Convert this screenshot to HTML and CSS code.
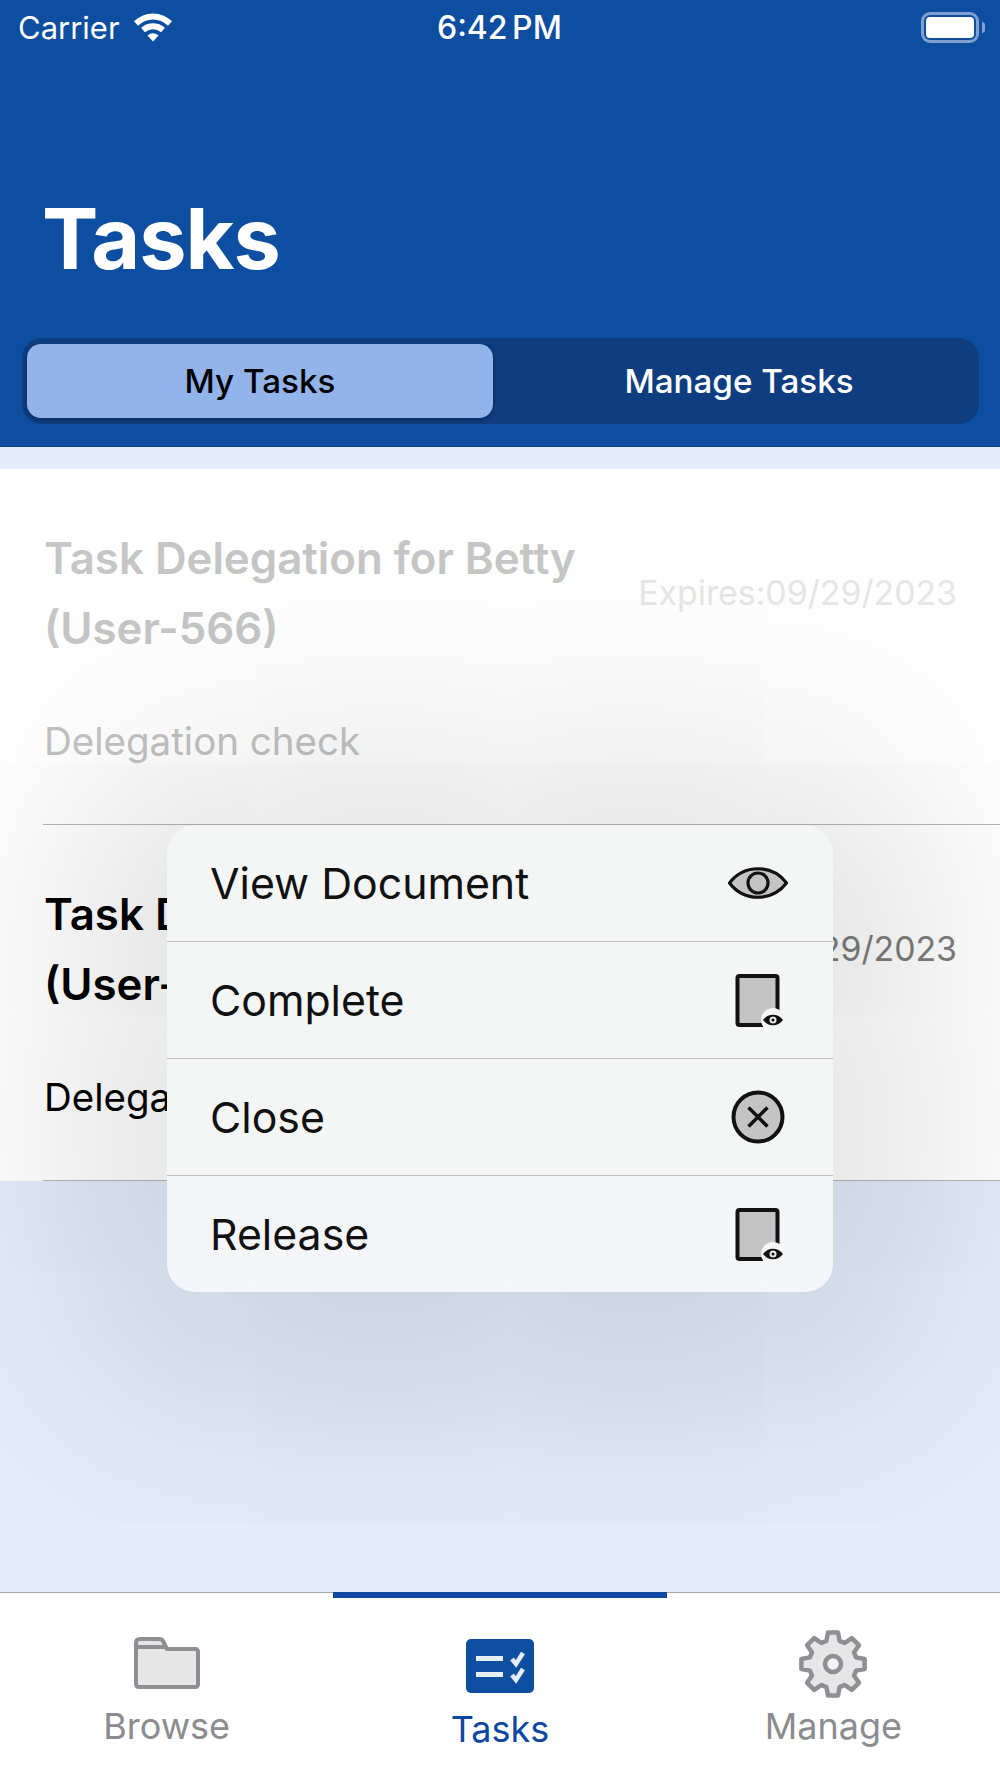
FILE: index.html
```html
<!DOCTYPE html>
<html lang="en">
<head>
<meta charset="utf-8">
<title>Tasks</title>
<link rel="stylesheet" href="styles.css">
</head>
<body>
<div class="app">
  <header class="header">
    <div class="status">
      <div class="status-left">
        <span class="carrier">Carrier</span>
        <svg class="wifi" viewBox="0 0 40 30"><path d="M3 11.5C13 2 27 2 37 11.5" /><path d="M10 18C16 13 24 13 30 18" /><path class="wifi-dot" d="M14.5 23.5C18 20.5 22 20.5 25.5 23.5L20 29.5Z"/></svg>
      </div>
      <span class="time">6:42 PM</span>
      <div class="battery"><div class="battery-fill"></div><div class="battery-cap"></div></div>
    </div>
    <h1 class="title">Tasks</h1>
    <div class="segments">
      <div class="segment segment-on">My Tasks</div>
      <div class="segment segment-off">Manage Tasks</div>
    </div>
  </header>
  <div class="band"></div>
  <section class="list">
    <article class="task task-faded">
      <div class="task-main">
        <h2 class="task-title">Task Delegation for Betty (User-566)</h2>
        <p class="task-sub">Delegation check</p>
      </div>
      <div class="task-date">Expires:09/29/2023</div>
    </article>
    <article class="task">
      <div class="task-main">
        <h2 class="task-title">Task Delegation for Betty (User-566)</h2>
        <p class="task-sub">Delegation check</p>
      </div>
      <div class="task-date">Expires:09/29/2023</div>
    </article>
  </section>
  <div class="empty"></div>
  <nav class="tabs">
    <div class="tab">
      <svg class="tab-icon icon-folder" viewBox="0 0 66 52"><path class="folder-back" d="M2 6Q2 2 6 2H25Q28 2 29 4L33 12H61Q64 12 64 15V47Q64 50 61 50H5Q2 50 2 47Z"/><path class="folder-line" d="M3 10H31"/></svg>
      <span class="tab-label">Browse</span>
    </div>
    <div class="tab tab-on">
      <svg class="tab-icon icon-tasks" viewBox="0 0 68 54"><rect class="tasks-bg" width="68" height="54" rx="5"/><rect class="tasks-mark" x="10" y="17" width="27" height="5"/><rect class="tasks-mark" x="10" y="33" width="27" height="5"/><path class="tasks-check" d="M46 20L50 25L57 14"/><path class="tasks-check" d="M46 36L50 41L57 30"/></svg>
      <span class="tab-label">Tasks</span>
    </div>
    <div class="tab">
      <svg class="tab-icon icon-gear" viewBox="-35 -35 70 70"><polygon class="gear" points="-6.6,-23.1 -5,-31.6 5,-31.6 6.6,-23.1 11.6,-21 18.8,-25.9 25.9,-18.8 21,-11.6 23.1,-6.6 31.6,-5 31.6,5 23.1,6.6 21,11.6 25.9,18.8 18.8,25.9 11.6,21 6.6,23.1 5,31.6 -5,31.6 -6.6,23.1 -11.6,21 -18.8,25.9 -25.9,18.8 -21,11.6 -23.1,6.6 -31.6,5 -31.6,-5 -23.1,-6.6 -21,-11.6 -25.9,-18.8 -18.8,-25.9 -11.6,-21"/><circle class="gear-hole" r="8"/></svg>
      <span class="tab-label">Manage</span>
    </div>
  </nav>
  <div class="menu">
    <div class="menu-row">
      <span class="menu-text">View Document</span>
      <svg class="menu-icon" viewBox="0 0 60 60"><path class="ic-shape ic-thin" d="M1.500 30C16 11 44 11 58.500 30C44 49 16 49 1.500 30Z"/><circle class="ic-shape ic-thin" cx="30" cy="30" r="10"/></svg>
    </div>
    <div class="menu-row">
      <span class="menu-text">Complete</span>
      <svg class="menu-icon" viewBox="0 0 60 60"><rect class="ic-shape" x="9.5" y="6" width="40" height="49" rx="2"/><circle class="ic-halo" cx="45" cy="50" r="12"/><path class="ic-black" d="M35 50C40 43 50 43 55 50C50 57 40 57 35 50Z"/><circle class="ic-pupil" cx="45" cy="50" r="3.500"/><circle class="ic-black" cx="45" cy="50" r="1.500"/></svg>
    </div>
    <div class="menu-row">
      <span class="menu-text">Close</span>
      <svg class="menu-icon" viewBox="0 0 60 60"><circle class="ic-shape" cx="30" cy="30" r="24.500"/><path class="ic-x" d="M20.500 20.500L39.500 39.500M39.500 20.500L20.500 39.500"/></svg>
    </div>
    <div class="menu-row">
      <span class="menu-text">Release</span>
      <svg class="menu-icon" viewBox="0 0 60 60"><rect class="ic-shape" x="9.5" y="6" width="40" height="49" rx="2"/><circle class="ic-halo" cx="45" cy="50" r="12"/><path class="ic-black" d="M35 50C40 43 50 43 55 50C50 57 40 57 35 50Z"/><circle class="ic-pupil" cx="45" cy="50" r="3.500"/><circle class="ic-black" cx="45" cy="50" r="1.500"/></svg>
    </div>
  </div>
</div>
</body>
</html>
```
FILE: styles.css
```css
* { box-sizing: border-box; }
html, body { margin: 0; padding: 0; }
body { font-family: Inter, "Noto Sans", sans-serif; color: #000; background: #e2ecfa; }

.app { position: relative; width: 1000px; height: 1778px; display: flex; flex-direction: column; overflow: hidden; }

.header { height: 447px; flex: none; background: #0d4ea0; color: #fff; padding: 0 21px 0 22px; border-bottom: 1px solid #0a3f96; }
.status { height: 56px; display: flex; align-items: center; justify-content: space-between; position: relative; margin-left: -4px; margin-right: -2px; }
.status-left { display: flex; align-items: center; gap: 13px; }
.carrier { font-size: 31px; line-height: 56px; }
.wifi { width: 40px; height: 30px; fill: none; stroke: #fff; stroke-width: 6px; margin-top: -2px; }
.wifi-dot { fill: #fff; stroke: none; }
.time { font-size: 32px; font-weight: 500; word-spacing: -4px; position: absolute; left: 419px; top: 9px; line-height: 38px; }
.battery { width: 58px; height: 31px; border: 3px solid #7f9fd0; border-radius: 9px; padding: 2px; position: relative; margin-top: -2px; margin-right: 2px; }
.battery-fill { width: 100%; height: 100%; background: #fff; border-radius: 4px; }
.battery-cap { position: absolute; right: -9px; top: 7px; width: 3px; height: 11px; background: #7f9fd0; border-radius: 0 3px 3px 0; }

.title { margin: 136px 0 0 20px; font-size: 84.500px; line-height: 92px; font-weight: 700; letter-spacing: -1px; height: 92px; }

.segments { margin-top: 54px; height: 86px; background: #0e3d80; border-radius: 20px; padding: 6px 5px; display: flex; }
.segment { flex: 1; display: flex; align-items: center; justify-content: center; font-size: 33.200px; font-weight: 500; }
.segment-off { padding-left: 11px; }
.segment-on { flex: 0 0 466px; background: #92b4ea; color: #000; border-radius: 14px; box-shadow: 0 2px 5px rgba(0,0,0,.25); }

.band { height: 22px; flex: none; background: #e2ecfa; }

.list { flex: none; background: #fff; }
.task { height: 356px; margin-left: 43px; padding: 55px 43px 0 0; border-bottom: 1px solid #b5b5b5; display: flex; justify-content: space-between; }
.task-main { width: 570px; padding-left: 1px; }
.task-title { margin: 0; font-size: 43.800px; line-height: 70px; font-weight: 600; }
.task-sub { margin: 55px 0 0; font-size: 38.500px; line-height: 44px; }
.task-date { margin-top: 47px; font-size: 33.800px; line-height: 44px; color: #7d7d7d; white-space: nowrap; }
.task-faded .task-title { color: #c6c6c6; }
.task-faded .task-sub { color: #c2c2c2; }
.task-faded .task-date { color: #e6e6e6; }

.empty { flex: 1; background: #e2ecfa; }

.tabs { flex: none; height: 186px; background: #fff; border-top: 1px solid #a6a8ad; display: flex; position: relative; z-index: 3; }
.tab { flex: 1; display: flex; flex-direction: column; align-items: center; color: #8b8b90; font-size: 36px; position: relative; }
.tab-on { color: #0d47a1; }
.tab-on::before { content: ""; position: absolute; left: 0; right: 0; top: -1px; height: 6px; background: #0d47a1; }
.tab-icon { display: block; }
.tab-label { line-height: 40px; }
.icon-folder { width: 66px; height: 52px; margin-top: 44px; margin-bottom: 17px; }
.folder-back { fill: #e6e6e6; stroke: #8e8e93; stroke-width: 4px; stroke-linejoin: round; }
.folder-line { stroke: #8e8e93; stroke-width: 4px; fill: none; }
.icon-tasks { width: 68px; height: 54px; margin-top: 46px; margin-bottom: 16px; }
.tasks-bg { fill: #0d4ea0; }
.tasks-mark { fill: #e8eef8; }
.tasks-check { fill: none; stroke: #e8eef8; stroke-width: 4.5px; }
.icon-gear { width: 70px; height: 70px; margin-top: 36px; margin-bottom: 7px; }
.gear { fill: #e6e6e6; stroke: #8e8e93; stroke-width: 4.5px; stroke-linejoin: round; }
.gear-hole { fill: #f4f4f4; stroke: #8e8e93; stroke-width: 4.5px; }

.menu { position: absolute; left: 167px; top: 825px; width: 666px; height: 467px; background: #f4f5f6; border-radius: 28px; display: flex; flex-direction: column; box-shadow: 0 10px 240px 70px rgba(0,0,0,.15); z-index: 2; background-image: linear-gradient(#f4f5f5 70%, #f4f6fb); }
.menu-row { flex: 1; display: flex; align-items: center; justify-content: space-between; padding: 2px 45px 0 43px; border-top: 1px solid #c0c0c0; }
.menu-row:first-child { border-top: 0; }
.menu-text { font-size: 42.800px; line-height: 50px; color: #111; }
.menu-icon { width: 60px; height: 60px; flex: none; margin-top: -2px; }
.ic-shape { fill: #c4c4c4; stroke: #111; stroke-width: 4px; stroke-linejoin: round; }
.ic-thin { stroke-width: 3.200px; }
.ic-halo { fill: #f4f5f5; }
.ic-black { fill: #111; }
.ic-pupil { fill: #e8e8e8; }
.ic-x { fill: none; stroke: #111; stroke-width: 3.500px; }
```
